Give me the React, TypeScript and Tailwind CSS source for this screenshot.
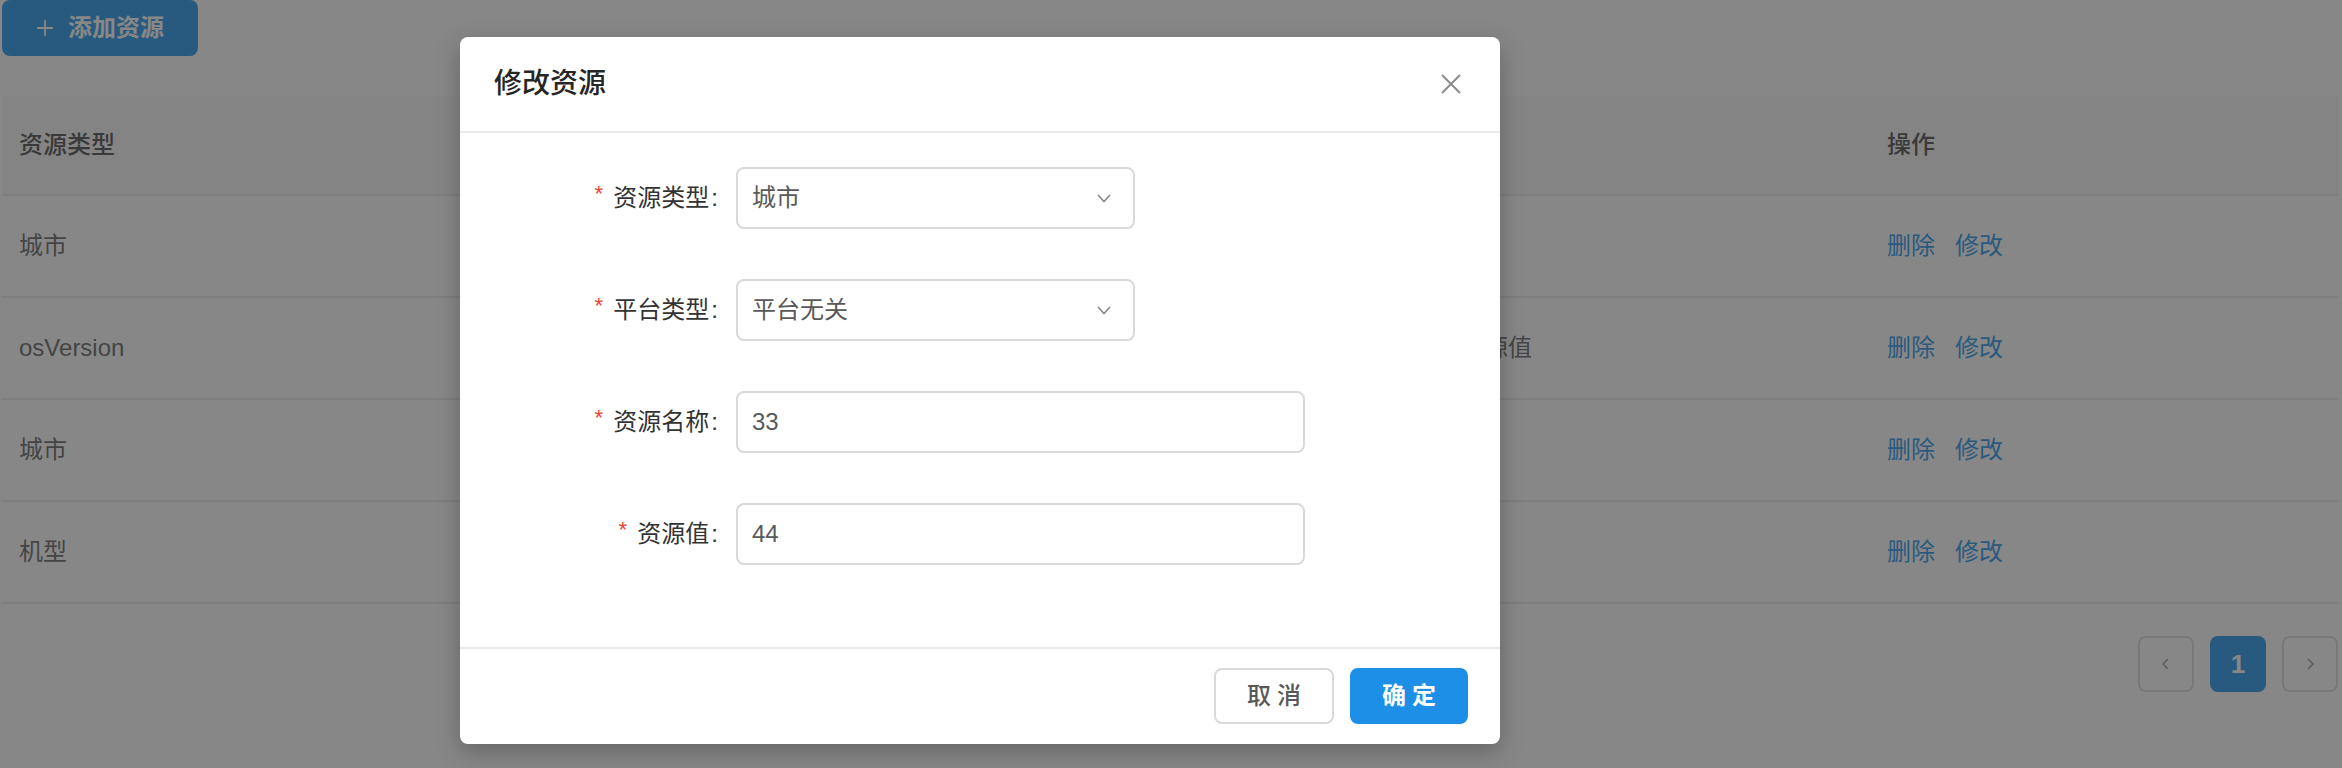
import React from 'react';

const fontStack = "font-['Liberation_Sans','Noto_Sans_CJK_SC',sans-serif]";

interface RowData {
    type: string;
    platform: string;
    name: string;
    value: string;
}

const rows: RowData[] = [
    { type: '城市', platform: '平台无关', name: '33', value: '44' },
    { type: 'osVersion', platform: 'Android', name: '系统版本', value: '测试资源值' },
    { type: '城市', platform: '平台无关', name: '北京', value: '11' },
    { type: '机型', platform: 'iOS', name: 'iPhone', value: '22' },
];

const cnGrid = 'grid grid-cols-[444px_475px_475px_475px_1fr] items-center';

function ResourceTable() {
    return (
        <div className="mt-[40px]">
            <div className={cnGrid + ' h-[100px] bg-[#f7f7f7] border-b-2 border-[#e9e9e9] text-[24px] font-medium text-[#404040]'}>
                <div className="pl-[17px]">资源类型</div>
                <div className="pl-[16px]">平台类型</div>
                <div className="pl-[16px]">资源名称</div>
                <div className="pl-[16px]">资源值</div>
                <div className="pl-[16px]">操作</div>
            </div>
            {rows.map((r, i) => (
                <div key={i} className={cnGrid + ' h-[102px] border-b-2 border-[#e9e9e9] text-[24px] text-[#595959]'}>
                    <div className="pl-[17px]">{r.type}</div>
                    <div className="pl-[16px]">{r.platform}</div>
                    <div className="pl-[16px]">{r.name}</div>
                    <div className="pl-[16px]">{r.value}</div>
                    <div className="pl-[16px] flex gap-[20px] text-[#108ee9]">
                        <span>删除</span>
                        <span>修改</span>
                    </div>
                </div>
            ))}
        </div>
    );
}

function Pager() {
    const cnBox = 'w-[56px] h-[56px] rounded-[8px] flex items-center justify-center';
    return (
        <div className="flex justify-end gap-[16px] mt-[32px]">
            <div className={cnBox + ' border-2 border-[#d9d9d9] text-[#999]'}>
                <svg width="14" height="14" viewBox="0 0 14 14"><path d="M9 2 L4 7 L9 12" fill="none" stroke="currentColor" strokeWidth="1.6" /></svg>
            </div>
            <div className={cnBox + ' bg-[#108ee9] text-white text-[26px] font-bold'}>1</div>
            <div className={cnBox + ' border-2 border-[#d9d9d9] text-[#999]'}>
                <svg width="14" height="14" viewBox="0 0 14 14"><path d="M5 2 L10 7 L5 12" fill="none" stroke="currentColor" strokeWidth="1.6" /></svg>
            </div>
        </div>
    );
}

function Chevron() {
    return (
        <svg width="14" height="9" viewBox="0 0 14 9" className="text-[#888]">
            <path d="M1 1 L7 7.5 L13 1" fill="none" stroke="currentColor" strokeWidth="1.6" />
        </svg>
    );
}

interface FieldProps {
    label: string;
    value: string;
    select?: boolean;
}
function Field({ label, value, select }: FieldProps) {
    return (
        <div className="flex items-center mb-[50px]">
            <div className="w-[276px] flex justify-end items-center pr-[18px] text-[24px] text-[#333]">
                <span className="text-[#f04134] text-[22px] mr-[8px] mt-[-4px] font-['Liberation_Mono',monospace]">*</span>
                <span>{label}</span>
                <span className="ml-[2px]">:</span>
            </div>
            <div className={(select ? 'w-[399px]' : 'w-[569px]') + ' h-[62px] border-2 border-[#d9d9d9] rounded-[8px] flex items-center justify-between pl-[14px] pr-[22px] text-[24px] text-[#595959]'}>
                <span>{value}</span>
                {select && <Chevron />}
            </div>
        </div>
    );
}

function EditModal() {
    return (
        <div className="absolute left-[460px] top-[37px] w-[1040px] bg-white rounded-[8px] shadow-[0_8px_24px_rgba(0,0,0,0.25)]">
            <div className="h-[96px] flex items-center justify-between px-[34px] border-b-2 border-[#e9e9e9]">
                <span className="text-[28px] font-medium text-[#262626]">修改资源</span>
                <svg width="22" height="20" viewBox="0 0 22 20" className="text-[#8c8c8c] mr-[4px]">
                    <path d="M2 1 L20 19 M20 1 L2 19" fill="none" stroke="currentColor" strokeWidth="2" />
                </svg>
            </div>
            <div className="pt-[34px] pb-[32px]">
                <Field label="资源类型" value="城市" select />
                <Field label="平台类型" value="平台无关" select />
                <Field label="资源名称" value="33" />
                <Field label="资源值" value="44" />
            </div>
            <div className="border-t-2 border-[#e9e9e9] flex justify-end gap-[16px] pt-[19px] pb-[20px] pr-[32px]">
                <button className="w-[120px] h-[56px] border-2 border-[#d9d9d9] rounded-[8px] text-[24px] font-medium text-[#595959] tracking-[6px] pl-[6px]">取消</button>
                <button className="w-[118px] h-[56px] bg-[#1e8fe6] rounded-[8px] text-[24px] font-bold text-white tracking-[6px] pl-[6px]">确定</button>
            </div>
        </div>
    );
}

function App() {
    return (
        <div className={'relative w-full h-[768px] overflow-hidden bg-white ' + fontStack}>
            <div className="pl-[2px] pr-[4px]">
                <button className="w-[196px] h-[56px] bg-[#108ee9] rounded-[8px] flex items-center justify-center gap-[14px] text-white text-[24px] font-bold">
                    <svg width="18" height="18" viewBox="0 0 18 18"><path d="M9 1 V17 M1 9 H17" stroke="currentColor" strokeWidth="1.8" /></svg>
                    <span>添加资源</span>
                </button>
                <ResourceTable />
                <Pager />
            </div>
            <div className="absolute inset-0 bg-[rgba(55,55,55,0.6)]" />
            <EditModal />
        </div>
    );
}

export default App;
